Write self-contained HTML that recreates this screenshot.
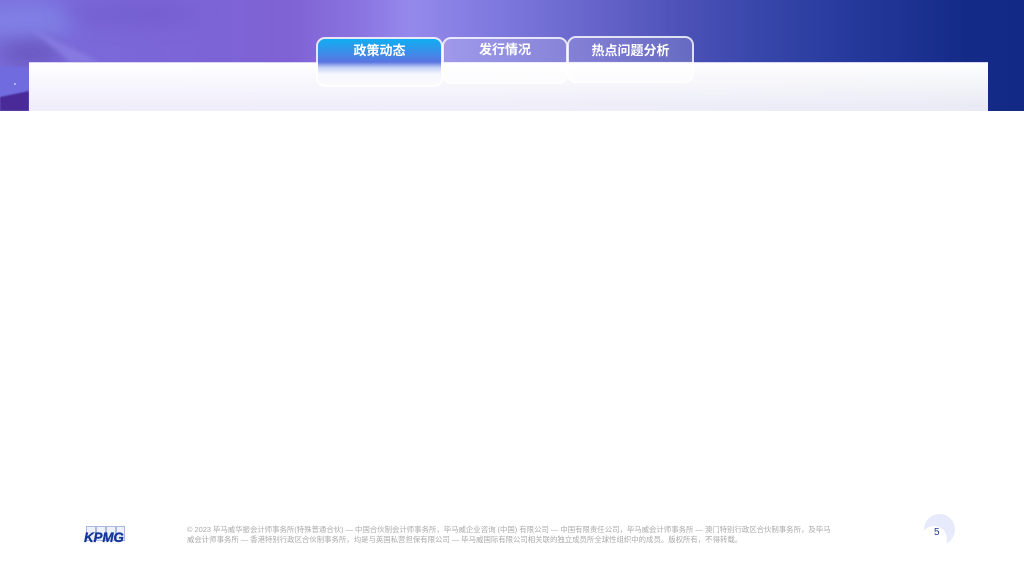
<!DOCTYPE html>
<html lang="zh">
<head>
<meta charset="utf-8">
<style>
html,body{margin:0;padding:0;background:#fff;}
body{width:1024px;height:576px;overflow:hidden;position:relative;font-family:"Liberation Sans","Noto Sans CJK SC",sans-serif;}
.abs{position:absolute;}
#band{left:0;top:0;width:1024px;height:111px;overflow:hidden;background:linear-gradient(90deg,#7a6ddb 0,#7b66d8 150px,#7f62d4 290px,#8a74e0 360px,#9589ec 410px,#7d78dd 500px,#6563c9 600px,#4a50b6 690px,#3545a8 770px,#24389a 860px,#142a87 970px,#122a85 1024px);}
#panel{left:29px;top:62px;width:959px;height:49px;box-sizing:border-box;border-top:1px solid #d9d2f5;background:linear-gradient(180deg,#fff 0,rgba(255,255,255,.7) 25%,rgba(255,255,255,0) 90%),linear-gradient(90deg,#f1eefb 0,#f0eefa 45%,#e9ebf4 100%);}
.tab{box-sizing:border-box;border:2px solid rgba(255,255,255,.82);border-radius:9px;color:#fff;text-align:center;font-weight:bold;font-size:13px;background-clip:padding-box;}
#t1{left:316px;top:37px;width:127px;height:50px;line-height:23px;background-image:linear-gradient(180deg,#10aef2 0,#3c8ce9 30%,#5a74e0 50%,#c5d2f6 62%,#f6f7fd 76%,#fafafd 100%);}
#t2{left:442px;top:37px;width:126px;height:47px;line-height:21px;background-image:linear-gradient(180deg,rgba(255,255,255,.18) 0,rgba(255,255,255,.18) 53%,rgba(255,255,255,.6) 54%,rgba(255,255,255,.6) 100%);}
#t3{left:567px;top:36px;width:127px;height:47px;line-height:25px;background-image:linear-gradient(180deg,rgba(255,255,255,.16) 0,rgba(255,255,255,.16) 55%,rgba(255,255,255,.6) 56%,rgba(255,255,255,.6) 100%);}
#legal{left:187px;top:525px;width:660px;font-size:7.400px;line-height:10px;color:#a9a9a9;white-space:nowrap;}
#kpmg{left:84px;top:531px;font:italic bold 13.500px/13px "Liberation Sans",sans-serif;color:#14379a;letter-spacing:-.2px;-webkit-text-stroke:.3px #14379a;}
#num{left:934px;top:527px;font-size:10px;line-height:12px;color:#1e3a9c;}
</style>
</head>
<body>
<div id="band" class="abs">
  <svg class="abs" style="left:0;top:0" width="340" height="111" viewBox="0 0 340 111">
    <defs>
      <filter id="b1" filterUnits="userSpaceOnUse" x="-100" y="-100" width="600" height="320"><feGaussianBlur stdDeviation="10"/></filter>
      <filter id="b2" filterUnits="userSpaceOnUse" x="-100" y="-100" width="600" height="320"><feGaussianBlur stdDeviation="2"/></filter>
      <filter id="b3" filterUnits="userSpaceOnUse" x="-100" y="-100" width="600" height="320"><feGaussianBlur stdDeviation=".8"/></filter>
    </defs>
    <ellipse cx="25" cy="22" rx="50" ry="20" fill="#8080e6" filter="url(#b1)"/>
    <ellipse cx="130" cy="14" rx="70" ry="10" fill="#6f58c6" opacity=".6" filter="url(#b1)"/>
    <ellipse cx="30" cy="52" rx="32" ry="10" fill="#6551b8" filter="url(#b1)"/>
    <path d="M30 28 L100 62 L70 62 Z" fill="#8f86e6" opacity=".6" filter="url(#b2)"/>
    <path d="M0 66 L29 68 L29 92 L0 98 Z" fill="#6f6ce0" filter="url(#b3)"/>
    <path d="M0 97 L29 91 L29 111 L0 111 Z" fill="#4a2a98" filter="url(#b3)"/>
    <circle cx="15" cy="84" r="1" fill="#c8c8ff"/>
  </svg>
  <div id="panel" class="abs"></div>
</div>
<div id="t1" class="abs tab">政策动态</div>
<div id="t2" class="abs tab">发行情况</div>
<div id="t3" class="abs tab">热点问题分析</div>

<svg class="abs" style="left:84px;top:525px" width="44" height="20" viewBox="0 0 44 20">
  <g fill="#eef1fa" stroke="#a9b8de" stroke-width="1">
    <rect x="2.500" y="1.500" width="9" height="14"/>
    <rect x="12.500" y="1.500" width="9" height="14"/>
    <rect x="22.500" y="1.500" width="9" height="14"/>
    <rect x="32.500" y="1.500" width="8" height="14"/>
  </g>
</svg>
<div id="kpmg" class="abs">KPMG</div>

<div id="legal" class="abs">© 2023 毕马威华振会计师事务所(特殊普通合伙) — 中国合伙制会计师事务所，毕马威企业咨询 (中国) 有限公司 — 中国有限责任公司，毕马威会计师事务所 — 澳门特别行政区合伙制事务所，及毕马<br>威会计师事务所 — 香港特别行政区合伙制事务所，均是与英国私营担保有限公司 — 毕马威国际有限公司相关联的独立成员所全球性组织中的成员。版权所有，不得转载。</div>

<svg class="abs" style="left:920px;top:510px" width="40" height="40" viewBox="0 0 40 40">
  <circle cx="19.500" cy="19.500" r="15.500" fill="#e6eafb"/>
  <circle cx="14" cy="29" r="13" fill="#fff"/>
</svg>
<div id="num" class="abs">5</div>
</body>
</html>
